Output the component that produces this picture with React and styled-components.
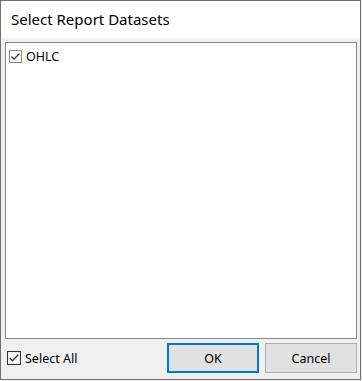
import React from "react";
import styled, { createGlobalStyle } from "styled-components";

const Global = createGlobalStyle`
  html, body { margin: 0; padding: 0; background: #ececec; }
  body { font-family: "Segoe UI", "Noto Sans", "Liberation Sans", sans-serif; }
  * { box-sizing: border-box; }
`;

const Window = styled.div`
  width: 361px;
  height: 380px;
  border: 1px solid #6f6f6f;
  background: #f0f0f0;
  display: flex;
  flex-direction: column;
`;

const Header = styled.div`
  height: 37px;
  background: #ffffff;
  display: flex;
  align-items: center;
  padding-left: 10px;
  padding-bottom: 2px;
  font-size: 15px;
  color: #000;
`;

const Body = styled.div`
  flex: 1;
  display: flex;
  flex-direction: column;
  padding: 4px 3px 0 4px;
`;

const List = styled.div`
  height: 297px;
  background: #fff;
  border: 1px solid #828790;
  padding: 5px 0 0 3px;
`;

const Row = styled.label`
  display: flex;
  align-items: center;
  gap: 4px;
  font-size: 12.5px;
  color: #000;
  height: 16px;
`;

const Footer = styled.div`
  flex: 1;
  display: flex;
  align-items: center;
  padding: 0 0 2px 2px;
`;

const Spacer = styled.div`
  flex: 1;
`;

const Button = styled.div`
  width: 92px;
  height: 30px;
  display: flex;
  align-items: center;
  justify-content: center;
  font-size: 12.5px;
  color: #000;
  background: #e1e1e1;
  border: ${(p) => (p.$primary ? "2px solid #0078d7" : "1px solid #adadad")};
  margin-left: ${(p) => (p.$gap ? "6px" : "0")};
`;

const BoxSvg = styled.svg`
  display: block;
  flex: none;
`;

function Check({ border, size }) {
  return (
    <BoxSvg width={size} height={size} viewBox="0 0 13 13">
      <rect x="0.5" y="0.5" width="12" height="12" fill="#fff" stroke={border} />
      <path d="M2.5 6.5 L5 9 L10.5 3.5" fill="none" stroke="#3a3a3a" strokeWidth="1.3" />
    </BoxSvg>
  );
}

export default function App() {
  return (
    <>
      <Global />
      <Window>
        <Header>Select Report Datasets</Header>
        <Body>
          <List>
            <Row>
              <Check border="#8a8a8a" size={13} />
              OHLC
            </Row>
          </List>
          <Footer>
            <Row>
              <Check border="#333" size={14} />
              Select All
            </Row>
            <Spacer />
            <Button $primary>OK</Button>
            <Button $gap>Cancel</Button>
          </Footer>
        </Body>
      </Window>
    </>
  );
}
